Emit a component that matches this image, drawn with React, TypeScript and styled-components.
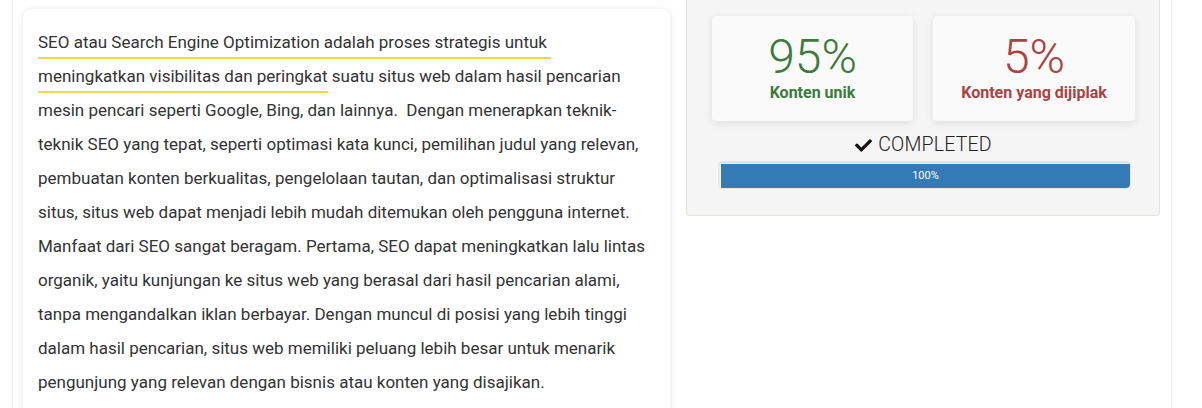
import React from "react";
import styled, { createGlobalStyle } from "styled-components";
import { FaCheck } from "react-icons/fa";

const Global = createGlobalStyle`
  html, body { margin: 0; padding: 0; background: #fff; }
  body { font-family: Roboto, "Liberation Sans", Arial, sans-serif; color: #333; }
`;

const Page = styled.div`
  width: 1202px;
  height: 408px;
  overflow: hidden;
  background: #fff;
`;

const Container = styled.div`
  margin-left: 12px;
  width: 1158px;
  height: 408px;
  border-left: 1px solid #ececec;
  border-right: 1px solid #ececec;
  display: flex;
  align-items: flex-start;
`;

const LeftCol = styled.div`
  padding: 9px 0 0 10px;
  width: 647px;
  flex: none;
`;

const ArticleCard = styled.div`
  background: #fff;
  border-radius: 8px;
  box-shadow: 0 1px 6px rgba(0, 0, 0, 0.12);
  padding: 16px 15px 40px 15px;
  height: 420px;
  box-sizing: border-box;
`;

const Text = styled.p`
  margin: 0;
  width: 616px;
  font-size: 17px;
  line-height: 34px;
  color: #333;
`;

const Mark = styled.span`
  border-bottom: 2px solid #f5d547;
  padding-bottom: 5px;
`;

const RightCol = styled.div`
  margin-left: 16px;
  width: 474px;
  flex: none;
`;

const Panel = styled.div`
  background: #f5f5f5;
  border: 1px solid #e4e4d6;
  border-top: none;
  border-radius: 0 0 4px 4px;
  padding: 16px 24px 26px 25px;
  box-sizing: border-box;
`;

const Stats = styled.div`
  display: grid;
  grid-template-columns: 201px 202px;
  column-gap: 20px;
`;

const StatCard = styled.div<{ $color: string }>`
  background: #fafafa;
  border-radius: 4px;
  box-shadow: 0 2px 8px rgba(0, 0, 0, 0.1);
  height: 105px;
  display: flex;
  flex-direction: column;
  align-items: center;
  padding-top: 15px;
  box-sizing: border-box;
  color: ${(p) => p.$color};
`;

const StatValue = styled.div`
  font-size: 48px;
  font-weight: 300;
  line-height: 52px;
`;

const StatLabel = styled.div`
  font-size: 16px;
  font-weight: 700;
  line-height: 20px;
`;

const Status = styled.div`
  margin-top: 13px;
  display: flex;
  justify-content: center;
  align-items: center;
  gap: 6px;
  font-size: 19.5px;
  font-weight: 300;
  color: #222;
  line-height: 22px;
  letter-spacing: 0.2px;
  svg { font-size: 17px; color: #111; }
`;

const Progress = styled.div`
  margin: 5px 4px 0 6px;
  height: 28px;
  background: #f5f5f5;
  border-radius: 4px;
  box-shadow: inset 0 1px 2px rgba(0, 0, 0, 0.12);
  border: 1px solid #e8e8e8;
  box-sizing: border-box;
  padding: 2px 0 0 2px;
  overflow: hidden;
`;

const Bar = styled.div`
  height: 24px;
  background: #337ab7;
  color: #fff;
  font-size: 11px;
  line-height: 24px;
  text-align: center;
  border-radius: 0 0 4px 0;
`;

export default function App() {
  return (
    <Page>
      <Global />
      <Container>
        <LeftCol>
          <ArticleCard>
            <Text>
              <Mark>
                SEO atau Search Engine Optimization adalah proses strategis untuk{"\u00a0"}
                <br />
                meningkatkan visibilitas dan peringkat
              </Mark>{" "}
              suatu situs web dalam hasil pencarian mesin pencari seperti Google, Bing, dan lainnya.{"\u00a0"} Dengan menerapkan teknik-teknik SEO yang tepat, seperti optimasi kata kunci, pemilihan judul yang relevan, pembuatan konten berkualitas, pengelolaan tautan, dan optimalisasi struktur situs, situs web dapat menjadi lebih mudah ditemukan oleh pengguna internet. Manfaat dari SEO sangat beragam. Pertama, SEO dapat meningkatkan lalu lintas organik, yaitu kunjungan ke situs web yang berasal dari hasil pencarian alami, tanpa mengandalkan iklan berbayar. Dengan muncul di posisi yang lebih tinggi dalam hasil pencarian, situs web memiliki peluang lebih besar untuk menarik pengunjung yang relevan dengan bisnis atau konten yang disajikan.
            </Text>
          </ArticleCard>
        </LeftCol>
        <RightCol>
          <Panel>
            <Stats>
              <StatCard $color="#3c7a3d">
                <StatValue>95%</StatValue>
                <StatLabel>Konten unik</StatLabel>
              </StatCard>
              <StatCard $color="#a94442">
                <StatValue>5%</StatValue>
                <StatLabel>Konten yang dijiplak</StatLabel>
              </StatCard>
            </Stats>
            <Status>
              <FaCheck />
              <span>COMPLETED</span>
            </Status>
            <Progress>
              <Bar style={{ width: "100%" }}>100%</Bar>
            </Progress>
          </Panel>
        </RightCol>
      </Container>
    </Page>
  );
}
